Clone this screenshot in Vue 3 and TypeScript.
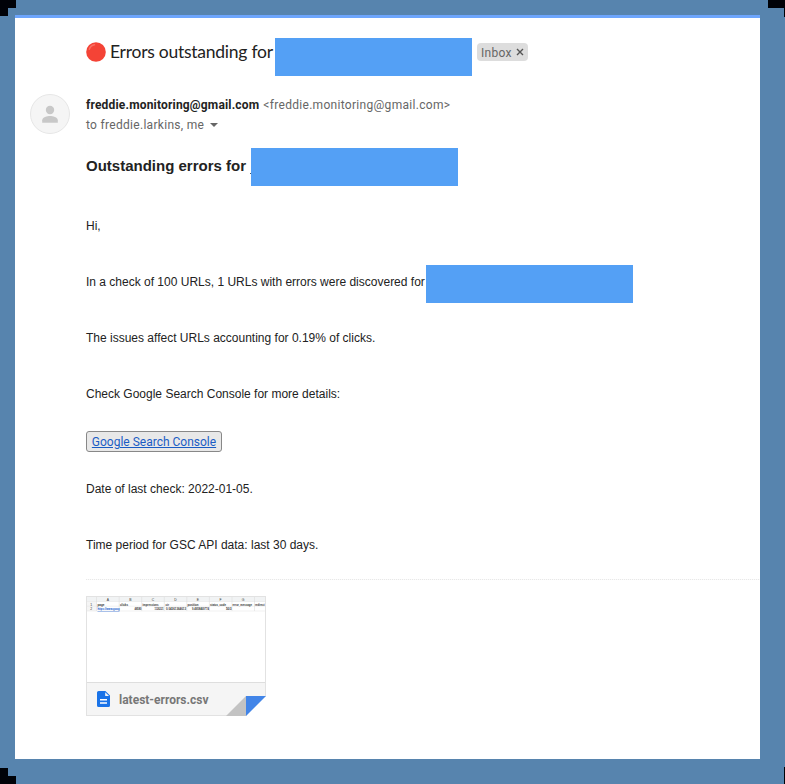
<script setup lang="ts">
interface Cell {
  text: string
  x: number
  width: number
  link?: boolean
}

const columns: number[] = [22, 44.5, 67, 89.5, 112, 134.5, 157]
const letters: string[] = ['A', 'B', 'C', 'D', 'E', 'F', 'G']
const headings: Cell[] = [
  { text: 'page', x: 11.5, width: 7 },
  { text: 'clicks', x: 34, width: 8 },
  { text: 'impressions', x: 56.5, width: 16 },
  { text: 'ctr', x: 79.5, width: 3.5 },
  { text: 'position', x: 101.5, width: 11 },
  { text: 'status_code', x: 124, width: 16 },
  { text: 'error_message', x: 146.5, width: 19.5 },
  { text: 'redirect', x: 169, width: 9.5 },
]
const values: Cell[] = [
  { text: 'https://www.goog', x: 11.5, width: 22, link: true },
  { text: '48580', x: 48.5, width: 7 },
  { text: '1126221', x: 68.5, width: 9 },
  { text: '0.04361364613', x: 80, width: 20 },
  { text: '9.4958469774', x: 106, width: 17 },
  { text: '503', x: 140, width: 5.5 },
]
</script>

<template>
  <div class="frame">
    <svg class="corners" width="785" height="784" viewBox="0 0 785 784" shape-rendering="crispEdges">
      <path d="M0 0H16V8H8V16H0Z M768 0H785V17H784V8H768Z M0 768H8V776H16V784H0Z M784 767H785V784H784Z" />
    </svg>
    <main class="mail">
      <header class="subject">
        <svg class="dot" width="20" height="20" viewBox="0 0 20 20">
          <circle cx="10" cy="10" r="9.8" fill="#f44336" />
          <path d="M3.3 7.3C4.2 4.7 6 3.2 8.5 2.8" fill="none" stroke="#fa6e62" stroke-width="1.5" stroke-linecap="round" />
        </svg>
        <h1>Errors outstanding for</h1>
        <span class="redaction subject-redaction"></span>
        <span class="label">
          Inbox
          <svg width="8" height="8" viewBox="0 0 8 8"><path d="M1 1L7 7M7 1L1 7" stroke="#555" stroke-width="1.4" /></svg>
        </span>
      </header>

      <section class="sender">
        <svg class="avatar" width="40" height="40" viewBox="0 0 40 40">
          <circle cx="20" cy="20" r="19.5" fill="#f5f5f5" stroke="#e6e6e6" />
          <circle cx="20" cy="16" r="4.2" fill="#c8c8c8" />
          <path d="M12.2 28.7V26.2C12.2 23.5 17.3 22.1 20 22.1S27.8 23.5 27.8 26.2V28.7Z" fill="#c8c8c8" />
        </svg>
        <div class="who">
          <div class="from"><b>freddie.monitoring@gmail.com</b><span>&lt;freddie.monitoring@gmail.com&gt;</span></div>
          <div class="to">
            <span>to freddie.larkins, me</span>
            <svg width="8" height="4" viewBox="0 0 8 4"><path d="M0 0H8L4 4Z" fill="#666" /></svg>
          </div>
        </div>
      </section>

      <article class="body">
        <div class="title">
          <h2>Outstanding errors for</h2><i class="tick"></i>
          <span class="redaction wide"></span>
        </div>
        <p>Hi,</p>
        <p class="check"><span class="sentence">In a check of 100 URLs, 1 URLs with errors were discovered for</span><span class="redaction wide"></span></p>
        <p>The issues affect URLs accounting for 0.19% of clicks.</p>
        <p>Check Google Search Console for more details:</p>
        <a class="console">Google Search Console</a>
        <p>Date of last check: 2022-01-05.</p>
        <p>Time period for GSC API data: last 30 days.</p>
      </article>

      <div class="divider"></div>

      <div class="attachment">
        <svg class="sheet" width="178" height="85" viewBox="1 1 178 85">
          <rect x="0" y="0" width="180" height="5.5" fill="#f1f3f4" />
          <rect x="0" y="5.5" width="10.5" height="9.5" fill="#f5f5f5" />
          <path d="M0 5.5H180M0 10.2H180M0 15H180" stroke="#e2e2e2" stroke-width=".5" />
          <path d="M10.5 0V15M33.2 0V15M55.7 0V15M78.3 0V15M100.8 0V15M123.4 0V15M146 0V15M168.5 0V15" stroke="#d8d8d8" stroke-width=".5" />
          <g class="cells">
            <text v-for="(letter, i) in letters" :key="letter" :x="columns[i]" y="4.6" text-anchor="middle">{{ letter }}</text>
            <text x="5.2" y="9.6" text-anchor="middle">1</text>
            <text x="5.2" y="14.2" text-anchor="middle">2</text>
            <text v-for="cell in headings" :key="cell.text" class="strong" :x="cell.x" y="9.6" :textLength="cell.width" lengthAdjust="spacingAndGlyphs">{{ cell.text }}</text>
            <text v-for="cell in values" :key="cell.text" class="strong" :class="{ link: cell.link }" :x="cell.x" y="14.2" :textLength="cell.width" lengthAdjust="spacingAndGlyphs">{{ cell.text }}</text>
          </g>
        </svg>
        <div class="file">
          <svg width="13" height="16" viewBox="0 0 13 16">
            <path d="M1.6 0H8.4L13 4.6V14.4A1.6 1.6 0 0 1 11.4 16H1.6A1.6 1.6 0 0 1 0 14.4V1.6A1.6 1.6 0 0 1 1.6 0Z" fill="#1a73e8" />
            <path d="M8.2 1.2V5H12Z" fill="#f5f5f5" />
            <path d="M3 8.7H10M3 11.9H10" stroke="#fff" stroke-width="1.5" />
          </svg>
          <span>latest-errors.csv</span>
        </div>
        <svg class="fold" width="40" height="20" viewBox="0 0 40 20">
          <path d="M0 20L20 0V20Z" fill="#c3c3c3" />
          <path d="M40 0V20H20Z" fill="#fff" />
          <path d="M20 0H40L20 20Z" fill="#4285e8" />
        </svg>
      </div>
    </main>
  </div>
</template>

<style>
body {
  margin: 0;
  background: #5784ae;
}
</style>

<style scoped>
.frame {
  position: relative;
  box-sizing: border-box;
  width: 785px;
  height: 784px;
  padding: 15px 25px 25px 15px;
  background: #5784ae;
  overflow: hidden;
}
.corners {
  position: absolute;
  top: 0;
  left: 0;
  fill: #000208;
}
.mail {
  box-sizing: border-box;
  height: 744px;
  padding: 20px 0 0 15px;
  border-top: 3px solid #6da5fc;
  background: #fff;
  font-family: Roboto, sans-serif;
}
h1, h2, p {
  margin: 0;
}
.redaction {
  flex: none;
  display: block;
  height: 38px;
  background: #54a0f5;
}
.subject {
  display: flex;
  height: 38px;
  padding-left: 56px;
}
.dot {
  flex: none;
  margin: 4px 4px 0 0;
}
h1 {
  flex: none;
  width: 165px;
  font: 400 17.5px/28px Lato, sans-serif;
  letter-spacing: -0.25px;
  color: #222;
  white-space: nowrap;
}
.subject-redaction {
  width: 197px;
}
.label {
  display: flex;
  align-items: center;
  gap: 4px;
  box-sizing: border-box;
  width: 51px;
  height: 18px;
  margin: 5px 0 0 5px;
  padding: 1px 0 0 4px;
  border-radius: 4px;
  background: #ddd;
  color: #666;
  font-size: 12px;
  letter-spacing: 0.3px;
}
.label svg {
  margin-top: -1px;
}
.sender {
  display: flex;
  gap: 16px;
  height: 36px;
  padding-top: 18px;
}
.avatar {
  flex: none;
}
.who {
  padding-top: 1px;
  font-size: 12px;
  line-height: 20px;
  color: #666;
  white-space: nowrap;
}
.from {
  display: flex;
  gap: 4px;
}
.from b {
  color: #222;
  letter-spacing: 0.18px;
}
.from span, .to {
  letter-spacing: 0.3px;
}
.to {
  display: flex;
  align-items: center;
  gap: 6px;
}
.body {
  padding: 18px 0 0 56px;
  font: 12px/16px "Liberation Sans", Arial, sans-serif;
  color: #222;
}
.title {
  display: flex;
  height: 38px;
  margin-bottom: 32px;
}
h2 {
  width: 164px;
  font-size: 15px;
  line-height: 36px;
  white-space: nowrap;
}
.tick {
  width: 1px;
  height: 1px;
  margin-top: 25px;
  background: #456;
}
.wide {
  width: 207px;
}
p {
  height: 16px;
  margin-bottom: 40px;
  white-space: nowrap;
}
.check {
  display: flex;
}
.check .redaction {
  margin-top: -9px;
}
.sentence {
  width: 340px;
}
.console {
  display: block;
  box-sizing: border-box;
  width: 136px;
  height: 21px;
  margin: -11px 0 29px;
  border: 1px solid #888;
  border-radius: 3px;
  background: #e8e8e8;
  color: #1a5cc4;
  font: 12px/21px Roboto, sans-serif;
  text-align: center;
  text-decoration: underline;
}
.divider {
  height: 1px;
  margin: -14px 0 16px 56px;
  background: repeating-linear-gradient(90deg, #e8e8e8 0 1px, #fafafa 1px 2px);
}
.attachment {
  position: relative;
  box-sizing: border-box;
  width: 180px;
  height: 120px;
  margin-left: 56px;
  border: 1px solid #e2e2e2;
}
.sheet {
  display: block;
}
.cells {
  font: 3.4px "Liberation Sans", Arial, sans-serif;
  fill: #333;
}
.strong {
  font-weight: 700;
}
.link {
  fill: #1155cc;
  text-decoration: underline;
}
.file {
  display: flex;
  align-items: center;
  gap: 9px;
  box-sizing: border-box;
  height: 33px;
  padding-left: 10px;
  border-top: 1px solid #dedede;
  background: #f5f5f5;
  color: #777;
  font-size: 12px;
  font-weight: 700;
}
.file span {
  padding-top: 2px;
}
.fold {
  position: absolute;
  right: -1px;
  bottom: -1px;
}
</style>
